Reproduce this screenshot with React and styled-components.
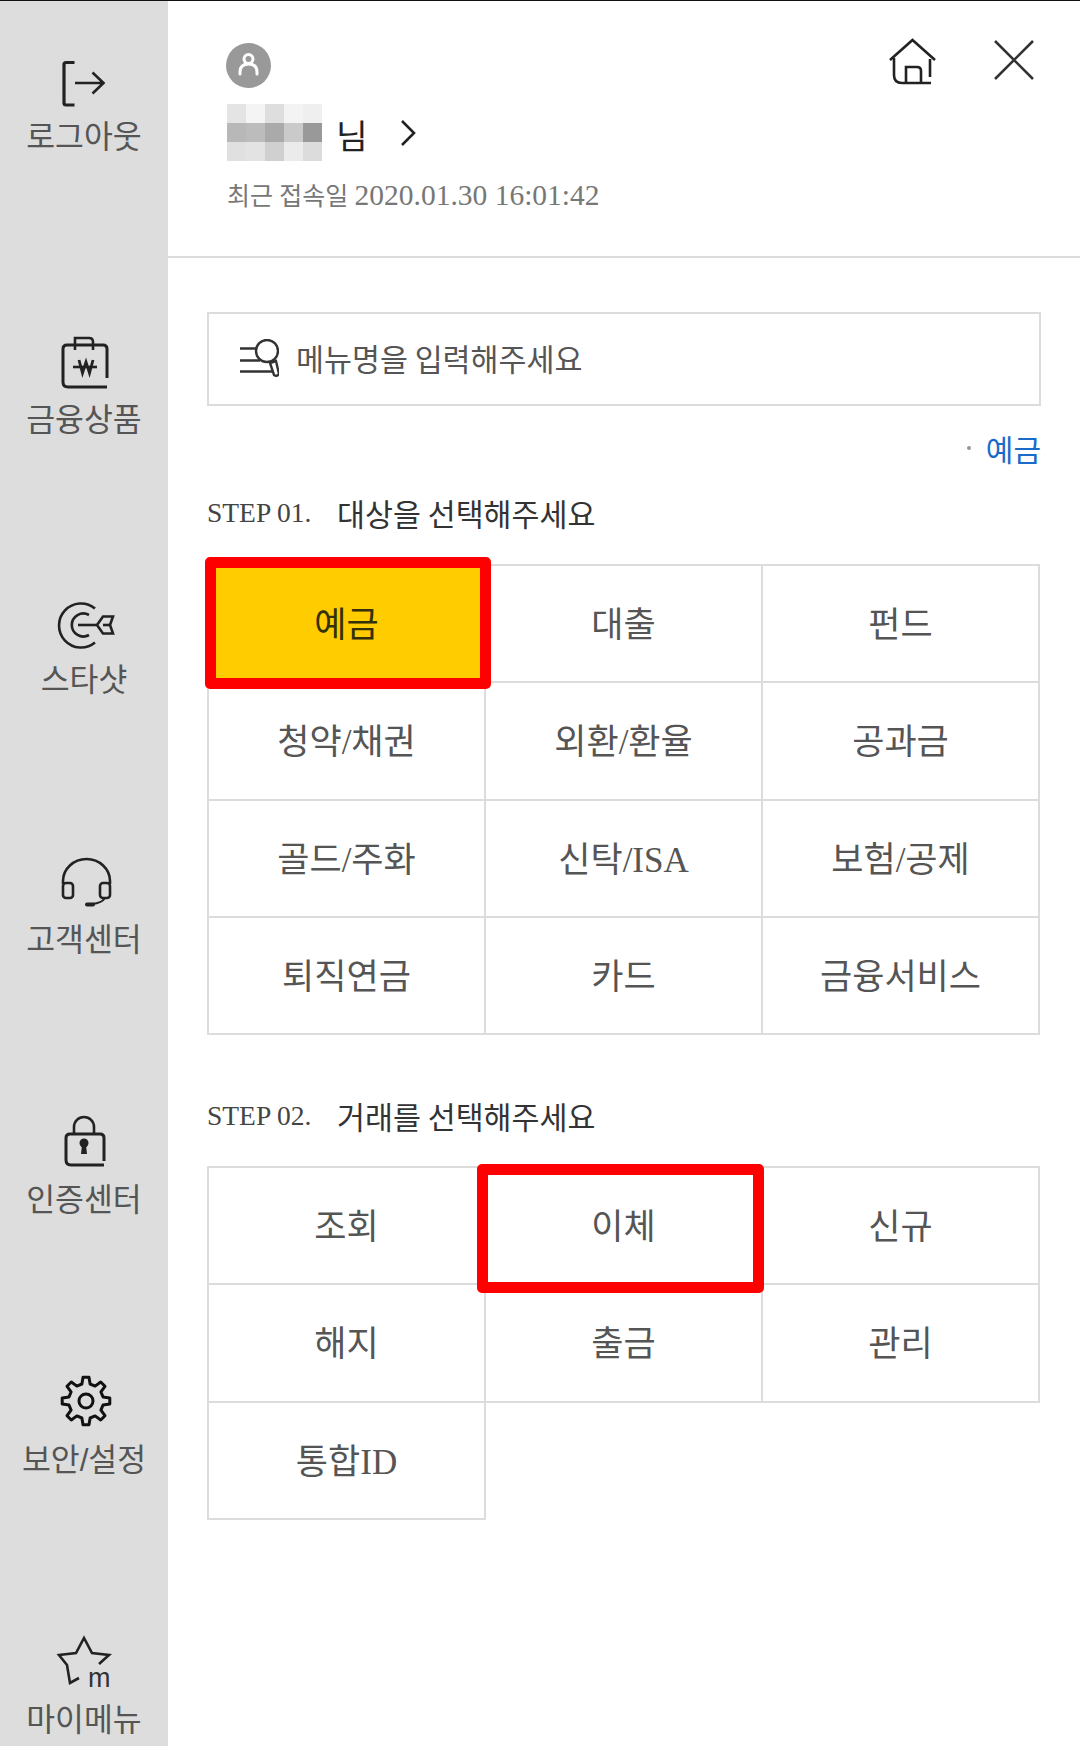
import styled, { createGlobalStyle } from "styled-components";

const GlobalStyle = createGlobalStyle`
	html, body {
		margin: 0;
		padding: 0;
		background: #fff;
	}

	body {
		font-family: "Liberation Serif", "Noto Sans CJK KR", serif;
	}
`;

const pixelRows = [
	["#e4e4e4", "#f4f4f4", "#dedede", "#f3f3f3", "#efefef"],
	["#b8b8b8", "#bcbcbc", "#aaaaaa", "#cacaca", "#999999"],
	["#e0e0e0", "#e3e3e3", "#d0d0d0", "#ebebeb", "#dcdcdc"],
];

const gearPath = (cx, cy, ro, ri, n) => {
	const step = (Math.PI * 2) / n;
	let d = "";
	for (let i = 0; i < n; i++) {
		const a = i * step - Math.PI / 2;
		const pts = [
			[ri, a - step * 0.3],
			[ro, a - step * 0.16],
			[ro, a + step * 0.16],
			[ri, a + step * 0.3],
		];
		pts.forEach(([r, t], j) => {
			const x = (cx + r * Math.cos(t)).toFixed(1);
			const y = (cy + r * Math.sin(t)).toFixed(1);
			d += `${i === 0 && j === 0 ? "M" : "L"}${x} ${y} `;
		});
	}
	return d + "Z";
};

const LogoutIcon = () => (
	<SideSvg viewBox="0 0 80 60">
		<path d="M30.5 10.5H22q-2 0-2 2V51q0 2 2 2H30.5" strokeWidth="3.2" />
		<path d="M31 31H59M48.5 20.5L59.5 31L48.5 41.5" />
	</SideSvg>
);

const BagIcon = () => (
	<SideSvg viewBox="0 0 80 60">
		<path d="M63 43V14q0-4-4-4H23q-4 0-4 4V47q0 5 5 5H63" strokeWidth="3" />
		<path d="M31 15V3H45q4 0 4 4V15" />
		<path d="M29 32H53" />
		<path d="M35 25L38.5 38L42 27L45.5 38L49 25" strokeWidth="2.8" />
	</SideSvg>
);

const DartIcon = () => (
	<SideSvg viewBox="0 0 80 60">
		<path d="M51 13.5A22 22 0 1 0 51 47.5" />
		<path d="M45 20A11.5 11.5 0 1 0 45 40" />
		<path d="M34 30H54" />
		<path d="M53 30L59 21.5H69L66 30L69 38.5H59Z" />
		<path d="M59 30H66" />
	</SideSvg>
);

const HeadsetIcon = () => (
	<SideSvg viewBox="0 0 80 60">
		<path d="M19 29V26a23.5 22 0 0 1 47 0V29" />
		<rect x="19" y="28" width="10" height="15" rx="3" />
		<rect x="56" y="28" width="10" height="15" rx="3" />
		<path d="M61 43Q58 48 48 49" strokeWidth="2" />
		<path d="M43 49.5H49" strokeWidth="4" strokeLinecap="round" />
	</SideSvg>
);

const LockIcon = () => (
	<SideSvg viewBox="0 0 80 60">
		<path d="M60 46V23q0-4-4-4H26q-4 0-4 4V45q0 5 5 5H60" strokeWidth="3" />
		<path d="M30 19V12a10 10 0 0 1 20 0V19" />
		<circle cx="40" cy="28" r="4.5" fill="#222" stroke="none" />
		<path d="M38 30H42L43 39H37Z" fill="#222" stroke="none" />
	</SideSvg>
);

const GearIcon = () => (
	<SideSvg viewBox="0 0 80 60">
		<path d={gearPath(42, 26, 24, 17.5, 8)} strokeWidth="3" stroke="#111" strokeLinejoin="round" />
		<circle cx="42" cy="26" r="7" strokeWidth="3" stroke="#111" />
	</SideSvg>
);

const StarIcon = () => (
	<SideSvg viewBox="0 0 80 60">
		<path d="M35 43L26 48L23 30L15 20L32 18L40 3L48 18L65 20L55 29" />
		<text x="44" y="52" fontFamily="Liberation Sans" fontSize="27" fill="#333" stroke="none">
			m
		</text>
	</SideSvg>
);

const sideItems = [
	{ label: "로그아웃", Icon: LogoutIcon, first: true },
	{ label: "금융상품", Icon: BagIcon },
	{ label: "스타샷", Icon: DartIcon },
	{ label: "고객센터", Icon: HeadsetIcon },
	{ label: "인증센터", Icon: LockIcon },
	{ label: "보안/설정", Icon: GearIcon },
	{ label: "마이메뉴", Icon: StarIcon },
];

const targets = [
	{ label: "예금", active: true, mark: "-9px -7px -8px -4px" },
	{ label: "대출" },
	{ label: "펀드" },
	{ label: "청약/채권" },
	{ label: "외환/환율" },
	{ label: "공과금" },
	{ label: "골드/주화" },
	{ label: "신탁/ISA" },
	{ label: "보험/공제" },
	{ label: "퇴직연금" },
	{ label: "카드" },
	{ label: "금융서비스" },
];

const deals = [
	{ label: "조회" },
	{ label: "이체", mark: "-4px -3px -10px -9px" },
	{ label: "신규" },
	{ label: "해지" },
	{ label: "출금" },
	{ label: "관리" },
	{ label: "통합ID" },
];

const App = () => {
	return (
		<Page>
			<GlobalStyle />
			<Sidebar>
				{sideItems.map(({ label, Icon, first }) => (
					<SideItem key={label} $first={first}>
						<Icon />
						<SideLabel>{label}</SideLabel>
					</SideItem>
				))}
			</Sidebar>

			<Main>
				<Header>
					<Profile>
						<Avatar>
							<svg width="45" height="45" viewBox="0 0 45 45" fill="none" stroke="#fff" strokeWidth="3">
								<circle cx="22.5" cy="16" r="4.5" />
								<path d="M14 31V29q0-8 8.5-8T31 29V31" strokeLinecap="round" />
							</svg>
						</Avatar>
						<NameRow>
							<Mosaic>
								{pixelRows.flat().map((shade, i) => (
									<MosaicCell key={i} $shade={shade} />
								))}
							</Mosaic>
							<Honorific>님</Honorific>
							<svg width="18" height="30" viewBox="0 0 18 30" fill="none" stroke="#222" strokeWidth="2.6">
								<path d="M3 3L15 15L3 27" />
							</svg>
						</NameRow>
						<LastLogin>
							최근 접속일 <LoginDate>2020.01.30 16:01:42</LoginDate>
						</LastLogin>
					</Profile>
					<Actions>
						<svg width="50" height="50" viewBox="0 0 50 50" fill="none" stroke="#222" strokeWidth="2.6">
							<path d="M1 22L23.5 2L46 22" />
							<path d="M5 20V37q0 8 8 8H42" />
							<path d="M41 21V39" />
							<path d="M17 45V29H28q4 0 4 4V45" />
						</svg>
						<svg width="44" height="44" viewBox="0 0 44 44" stroke="#333" strokeWidth="2.6">
							<path d="M3 3L41 41M41 3L3 41" />
						</svg>
					</Actions>
				</Header>

				<Content>
					<SearchBox>
						<svg width="40" height="40" viewBox="0 0 40 40" fill="none" stroke="#333" strokeWidth="2.4">
							<path d="M1 9.5H17M1 21.5H21M1 32.5H33" />
							<circle cx="28" cy="12" r="11" />
							<path d="M31 24L37 22L40 35Q38 38 35 36Z" />
						</svg>
						<SearchText>메뉴명을 입력해주세요</SearchText>
					</SearchBox>

					<Breadcrumb>
						<BreadcrumbDot />
						<BreadcrumbLink>예금</BreadcrumbLink>
					</Breadcrumb>

					<StepTitle>
						<StepNumber>STEP 01.</StepNumber>
						<StepText>대상을 선택해주세요</StepText>
					</StepTitle>
					<ChoiceGrid>
						{targets.map(({ label, active, mark }) => (
							<Choice key={label} $active={active} $mark={mark}>
								{label}
							</Choice>
						))}
					</ChoiceGrid>

					<StepTitle $second>
						<StepNumber>STEP 02.</StepNumber>
						<StepText>거래를 선택해주세요</StepText>
					</StepTitle>
					<ChoiceGrid>
						{deals.map(({ label, mark }) => (
							<Choice key={label} $mark={mark}>
								{label}
							</Choice>
						))}
					</ChoiceGrid>
				</Content>
			</Main>
		</Page>
	);
};

export default App;

const Page = styled.div`
	display: flex;
	width: 1080px;
	height: 1746px;
	overflow: hidden;
	box-sizing: border-box;
	border-top: 1px solid #111;
	background: #fff;
`;

const Sidebar = styled.nav`
	flex: 0 0 168px;
	display: flex;
	flex-direction: column;
	background: #dddddd;
	padding-top: 51px;
`;

const SideItem = styled.div`
	flex: 0 0 ${({ $first }) => ($first ? "283px" : "260px")};
	display: flex;
	flex-direction: column;
	align-items: center;
`;

const SideSvg = styled.svg.attrs({ width: 80, height: 60, fill: "none", stroke: "#222", strokeWidth: 2.6 })`
	display: block;
	overflow: visible;
`;

const SideLabel = styled.span`
	margin-top: 8px;
	font-family: "Liberation Sans", "Noto Sans CJK KR", sans-serif;
	font-size: 31.4px;
	line-height: 36px;
	color: #555;
	white-space: nowrap;
`;

const Main = styled.main`
	flex: 1;
	min-width: 0;
	display: flex;
	flex-direction: column;
`;

const Header = styled.header`
	display: flex;
	justify-content: space-between;
	align-items: flex-start;
	height: 257px;
	box-sizing: border-box;
	padding: 42px 44px 0 58px;
	border-bottom: 2px solid #dcdcdc;
`;

const Profile = styled.div`
	display: flex;
	flex-direction: column;
`;

const Avatar = styled.div`
	width: 45px;
	height: 45px;
	border-radius: 50%;
	background: #999;
`;

const NameRow = styled.div`
	display: flex;
	align-items: center;
	margin-top: 16px;
	margin-left: 1px;

	svg {
		margin-left: 31px;
	}
`;

const Mosaic = styled.div`
	display: grid;
	grid-template-columns: repeat(5, 19px);
	grid-auto-rows: 19px;
`;

const MosaicCell = styled.div`
	background: ${({ $shade }) => $shade};
`;

const Honorific = styled.span`
	margin-left: 14px;
	font-family: "Noto Sans CJK KR", sans-serif;
	font-size: 34.5px;
	line-height: 40px;
	margin-top: 2px;
	color: #222;
`;

const LastLogin = styled.div`
	margin-top: 17px;
	margin-left: 1px;
	font-size: 25px;
	line-height: 34px;
	color: #777;
	white-space: nowrap;
`;

const LoginDate = styled.span`
	font-size: 29.5px;
`;

const Actions = styled.div`
	display: flex;
	align-items: flex-start;
	gap: 53px;
	margin-top: -5px;
`;

const Content = styled.div`
	padding: 54px 39px 0;
`;

const SearchBox = styled.div`
	display: flex;
	align-items: center;
	height: 94px;
	box-sizing: border-box;
	padding-left: 30px;
	border: 2px solid #dcdcdc;
`;

const SearchText = styled.span`
	margin-left: 17px;
	padding-bottom: 2px;
	font-family: "Noto Sans CJK KR", sans-serif;
	font-size: 30.4px;
	color: #555;
`;

const Breadcrumb = styled.div`
	display: flex;
	align-items: center;
	justify-content: flex-end;
	gap: 15px;
	height: 44px;
	margin-top: 20px;
`;

const BreadcrumbDot = styled.span`
	width: 4px;
	height: 4px;
	border-radius: 50%;
	background: #999;
`;

const BreadcrumbLink = styled.span`
	font-family: "Noto Sans CJK KR", sans-serif;
	font-size: 30px;
	color: #1a6bc8;
`;

const StepTitle = styled.div`
	display: flex;
	align-items: center;
	height: 44px;
	margin-top: ${({ $second }) => ($second ? "61px" : "21px")};
	margin-bottom: ${({ $second }) => ($second ? "28px" : "29px")};
	white-space: nowrap;
`;

const StepNumber = styled.span`
	width: 130px;
	font-size: 27.5px;
	color: #444;
`;

const StepText = styled.span`
	font-family: "Noto Sans CJK KR", sans-serif;
	font-size: 30.4px;
	color: #333;
`;

const ChoiceGrid = styled.div`
	display: grid;
	grid-template-columns: repeat(3, 1fr);
	grid-auto-rows: 117.25px;
	padding-right: 3px;
`;

const Choice = styled.div`
	position: relative;
	display: flex;
	align-items: center;
	justify-content: center;
	margin: 0 -2px -2px 0;
	padding-bottom: 4px;
	border: 2px solid #dcdcdc;
	background: ${({ $active }) => ($active ? "#ffcc00" : "#fff")};
	font-size: 35px;
	color: ${({ $active }) => ($active ? "#33300a" : "#555")};

	${({ $mark }) =>
		$mark &&
		`
		&::after {
			content: "";
			position: absolute;
			inset: ${$mark};
			border: 11px solid #ff0000;
			border-radius: 5px;
			z-index: 1;
			pointer-events: none;
		}
	`}
`;
